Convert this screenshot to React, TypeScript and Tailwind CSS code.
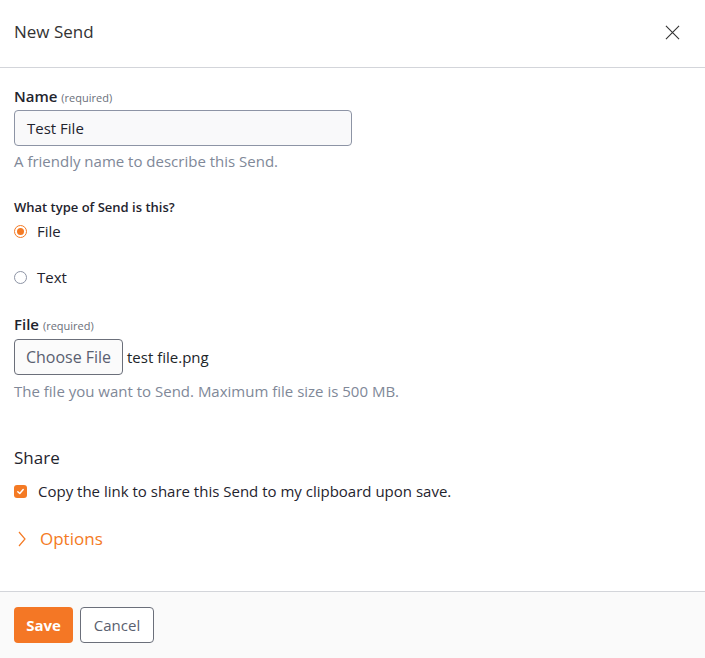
import React from "react";

export default function App() {
  const font = { fontFamily: "'Open Sans', 'Noto Sans', sans-serif" };
  return (
    <div className="w-[705px] h-[658px] bg-white flex flex-col text-[#212529]" style={font}>
      <div className="h-[68px] shrink-0 flex items-start justify-between pl-[14px] pr-[25px] pt-[20px] border-b border-[#d3d5da]">
        <div className="text-[17px] leading-[24px] text-[#333]">New Send</div>
        <svg width="15" height="15" viewBox="0 0 16 16" className="text-[#333] mt-[5px]">
          <path d="M1 1 L15 15 M15 1 L1 15" stroke="currentColor" strokeWidth="1.2" fill="none" />
        </svg>
      </div>
      <div className="flex-1 flex flex-col px-[14px] pt-[18px]">
        <div className="h-[20px] leading-[20px] text-[15px] font-semibold text-[#1f242e]">
          Name <span className="text-[11px] font-normal text-[#6b6f7a]">(required)</span>
        </div>
        <div className="mt-[4px] w-[338px] h-[36px] rounded-[4px] border border-[#8d94a5] bg-[#f9f9fa] flex items-center px-[12px] text-[15px] text-[#1f242e]">
          Test File
        </div>
        <div className="mt-[5px] text-[15px] leading-[20px] text-[#808898]">A friendly name to describe this Send.</div>

        <div className="mt-[27px] text-[13px] leading-[18px] font-semibold text-[#1f242e]">What type of Send is this?</div>
        <div className="mt-[5px] flex items-center gap-[10px] h-[20px]">
          <span className="w-[13px] h-[13px] rounded-full border border-[#f47a24] flex items-center justify-center">
            <span className="w-[7px] h-[7px] rounded-full bg-[#f47a24]" />
          </span>
          <span className="text-[15px] font-medium text-[#1f242e]">File</span>
        </div>
        <div className="mt-[26px] flex items-center gap-[10px] h-[20px]">
          <span className="w-[13px] h-[13px] rounded-full border border-[#8d94a5]" />
          <span className="text-[15px] font-medium text-[#1f242e]">Text</span>
        </div>

        <div className="mt-[27px] h-[20px] leading-[20px] text-[15px] font-semibold text-[#1f242e]">
          File <span className="text-[11px] font-normal text-[#6b6f7a]">(required)</span>
        </div>
        <div className="mt-[5px] flex items-center">
          <div className="w-[109px] h-[36px] rounded-[4px] border border-[#6b6f7a] bg-[#fbfbfb] flex items-center justify-center text-[16px] text-[#5a6070]">
            Choose File
          </div>
          <span className="ml-[4px] text-[15px] text-[#212529]">test file.png</span>
        </div>
        <div className="mt-[6px] text-[15px] leading-[20px] text-[#808898]">The file you want to Send. Maximum file size is 500 MB.</div>

        <div className="mt-[45px] text-[17px] leading-[24px] text-[#1f242e]">Share</div>
        <div className="mt-[11px] flex items-center gap-[11px] h-[20px]">
          <span className="w-[13px] h-[13px] rounded-[3px] bg-[#f47a24] flex items-center justify-center">
            <svg width="9" height="9" viewBox="0 0 10 10"><path d="M2 5.2 L4.2 7.3 L8 2.8" stroke="white" strokeWidth="1.6" fill="none" strokeLinecap="round" strokeLinejoin="round" /></svg>
          </span>
          <span className="text-[15px] text-[#1f242e]">Copy the link to share this Send to my clipboard upon save.</span>
        </div>
        <div className="mt-[26px] flex items-center gap-[13px] h-[24px] text-[#f47a24]">
          <svg width="10" height="16" viewBox="0 0 10 16" className="ml-[3px]"><path d="M2 1 L8 8 L2 15" stroke="currentColor" strokeWidth="1.2" fill="none" /></svg>
          <span className="text-[17px]">Options</span>
        </div>
      </div>
      <div className="h-[67px] shrink-0 border-t border-[#d3d5da] bg-[#fafafa] flex items-center gap-[7px] px-[14px]">
        <button className="h-[36px] w-[59px] rounded-[4px] bg-[#f47725] text-white text-[15px] font-bold">Save</button>
        <button className="h-[36px] w-[74px] rounded-[4px] border border-[#6b6f7a] bg-white text-[15px] text-[#5a6070]">Cancel</button>
      </div>
    </div>
  );
}
